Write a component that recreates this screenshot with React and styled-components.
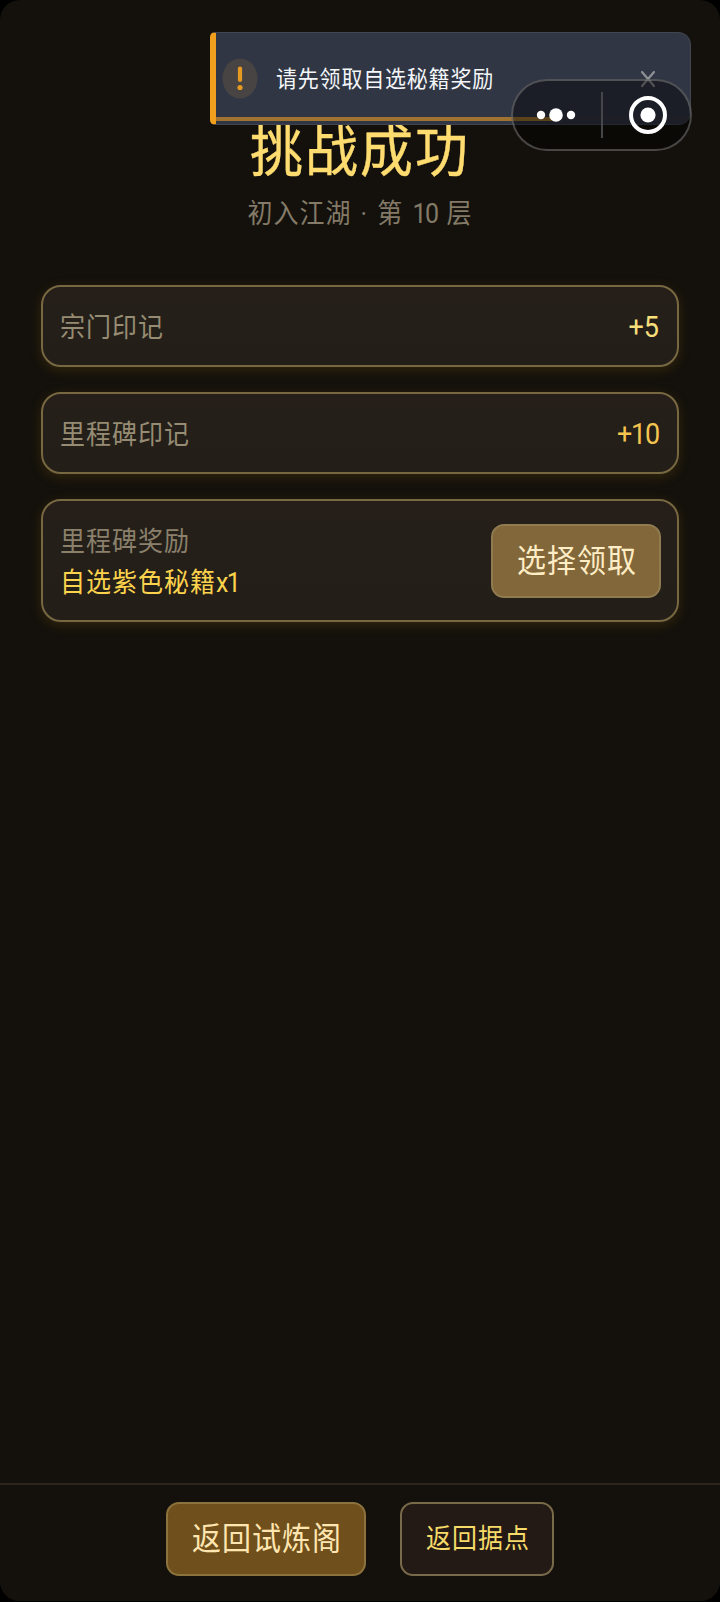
import React from 'react'
import styled, { createGlobalStyle } from 'styled-components'

const GlobalStyle = createGlobalStyle`
* { box-sizing: border-box; }
body { margin: 0; background: #000; font-family: Roboto, "Noto Sans CJK SC", sans-serif; }
button { font-family: inherit; margin: 0; padding: 0; cursor: pointer; }
`
const Screen = styled.div`
position: relative; display: flex; flex-direction: column; width: 720px; height: 1601px;
background: #14110c; border-radius: 20px; overflow: hidden;`

/* tall, narrow lettering */
const Txt = styled.span`
display: block; white-space: nowrap; font-weight: 400; transform: scaleY(1.08);
font-size: ${props => props.$size}px; line-height: ${props => props.$line || 36}px;
letter-spacing: ${props => props.$gap || 1}px; color: ${props => props.$color};`

const Header = styled.header`
display: flex; flex-direction: column; align-items: center; height: 285px; padding-top: 116px;`
const Title = styled(Txt).attrs({ as: 'h1' })`margin: 0; -webkit-text-stroke: 0.4px currentColor;`
const SubTitle = styled(Txt).attrs({ as: 'p' })`margin: 8px 0 0; word-spacing: 2px;`

const List = styled.main`
flex: 1; display: flex; flex-direction: column; gap: 25px; padding: 0 41px;`
const Card = styled.section`
display: flex; justify-content: space-between; align-items: center;
height: ${props => props.$tall ? 123 : 82}px; padding: 0 16px 0 17px;
border: 2px solid #786842; border-radius: 20px;
background: linear-gradient(180deg, #261e19 0%, #241f19 35%, #231e18 100%);
box-shadow: 0 3px 12px rgba(130, 95, 15, 0.28);`
const Label = styled(Txt)`padding-top: 3px;`
const Value = styled(Txt)`padding: 2px 2px 0 0;`
const Count = styled.span`letter-spacing: -1.6px;`
const Lines = styled.div`display: flex; flex-direction: column; gap: 2px;`

const Button = styled.button`
display: flex; align-items: center; justify-content: center;
width: ${props => props.$width}px; height: 74px; padding-left: 2px; border-radius: 13px;
border: 2px solid ${props => props.$border}; background: ${props => props.$bg};`

const Footer = styled.footer`
display: flex; justify-content: center; gap: 34px; height: 118px; padding-top: 17px;
border-top: 2px solid #2b251d; background: #14110c;`

const Toast = styled.div`
position: absolute; top: 32px; left: 210px; width: 481px; height: 93px; overflow: hidden;
display: flex; align-items: center; padding: 0 34px 0 6px;
background: #303643; border: 1px solid #434650; border-left: 6px solid #f0a01c;
border-radius: 5px 13px 13px 5px;`
const WarnIcon = styled.svg`width: 36px; height: 41px; flex: none;`
const Message = styled.div`flex: 1; padding: 0 0 0 18px;`
const CloseIcon = styled.svg`width: 16px; height: 18px; flex: none;`
const Progress = styled.div`
position: absolute; left: 0; right: 0; bottom: 3px; height: 4px; background: #353843;
&::before { content: ''; display: block; width: 337px; height: 4px; background: #a07430; }`

const Capsule = styled.div`
position: absolute; top: 79px; left: 511px; width: 181px; height: 72px;
display: flex; align-items: center; justify-content: space-between; padding: 0 23px 0 21px;
border: 2px solid rgba(145, 145, 145, 0.45); border-radius: 36px; background: rgba(0, 0, 0, 0.43);`
const Divider = styled.i`width: 2px; height: 46px; margin-right: 3px; background: #45464a;`

const rewards = [
    { label: '宗门印记', value: '+5', color: '#f8df7a', gap: 0.01 },
    { label: '里程碑印记', value: '+10', color: '#f5c550', gap: -1.2 },
]

const App = () => {
    return (
        <>
            <GlobalStyle />
            <Screen>
                <Header>
                    <Title $size={53} $line={72} $gap={2} $color="#ffdc70">挑战成功</Title>
                    <SubTitle $size={25} $color="#837a67">初入江湖 · 第 <Count>10</Count> 层</SubTitle>
                </Header>

                <List>
                    {rewards.map(item => (
                        <Card key={item.label}>
                            <Label $size={25} $color="#968c73">{item.label}</Label>
                            <Value $size={27} $gap={item.gap} $color={item.color}>{item.value}</Value>
                        </Card>
                    ))}
                    <Card $tall>
                        <Lines>
                            <Label $size={25} $color="#8a806b">里程碑奖励</Label>
                            <Label $size={25} $color="#fcd34c">自选紫色秘籍<Count>x1</Count></Label>
                        </Lines>
                        <Button $width={170} $border="#907a50" $bg="#82673a">
                            <Txt $size={29} $color="#ffedc5">选择领取</Txt>
                        </Button>
                    </Card>
                </List>

                <Footer>
                    <Button $width={200} $border="#8c723d" $bg="#6f4f1c">
                        <Txt $size={29} $color="#ffe6b0">返回试炼阁</Txt>
                    </Button>
                    <Button $width={154} $border="#796b49" $bg="#231a15">
                        <Txt $size={25} $color="#f6db69">返回据点</Txt>
                    </Button>
                </Footer>

                <Toast>
                    <WarnIcon viewBox="0 0 36 41">
                        <ellipse cx="18" cy="20.5" rx="17.5" ry="20" fill="#474443" />
                        <path d="M18 10.5V22" stroke="#e79a20" strokeWidth="4.2" strokeLinecap="round" />
                        <circle cx="18" cy="29.5" r="2.6" fill="#e79a20" />
                    </WarnIcon>
                    <Message>
                        <Txt $size={21} $gap={0.8} $color="#f4f6fa">请先领取自选秘籍奖励</Txt>
                    </Message>
                    <CloseIcon viewBox="0 0 16 18">
                        <path d="M2 2L14 16M14 2L2 16" stroke="#8d9095" strokeWidth="2.2" strokeLinecap="round" />
                    </CloseIcon>
                    <Progress />
                </Toast>

                <Capsule>
                    <svg width="44" height="16" viewBox="0 0 44 16" fill="#fff">
                        <circle cx="7" cy="8" r="4.2" />
                        <circle cx="22" cy="8" r="6.8" />
                        <circle cx="37" cy="8" r="4.2" />
                    </svg>
                    <Divider />
                    <svg width="38" height="38" viewBox="0 0 38 38" fill="#fff">
                        <circle cx="19" cy="19" r="17" fill="none" stroke="#fff" strokeWidth="4" />
                        <circle cx="19" cy="19" r="7.6" />
                    </svg>
                </Capsule>
            </Screen>
        </>
    )
}

export default App;
